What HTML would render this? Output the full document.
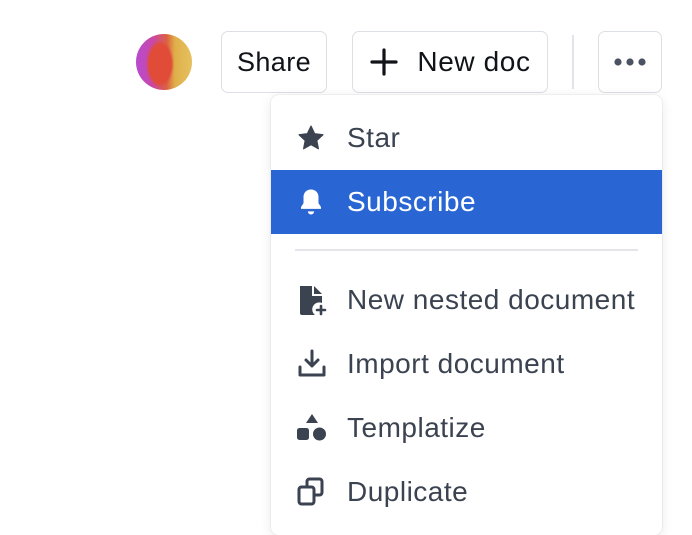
<!DOCTYPE html><html><head><style>
body{margin:0;width:692px;height:524px;background:#fff;position:relative;overflow:hidden;font-family:"Liberation Sans",sans-serif}
.btn{position:absolute;top:31px;height:62px;border:1px solid #dcdfe4;border-radius:7px;box-sizing:border-box;background:#fff;font-size:27px;letter-spacing:.4px;color:#111319;display:flex;align-items:center;justify-content:center}
.menu{position:absolute;left:271px;top:95px;width:391px;height:440px;background:#fff;border-radius:8px;box-shadow:0 2px 12px rgba(0,0,0,.09),0 0 0 1px rgba(0,0,0,.04)}
.it{position:absolute;left:0;width:391px;height:64px;display:flex;align-items:center;font-size:28px;letter-spacing:.5px;color:#3b4250}
.it span{position:absolute;left:76px}
.it svg{position:absolute;left:25px}
</style></head><body>
<div style="position:absolute;left:136px;top:34px;width:56px;height:56px;border-radius:50%;background:radial-gradient(ellipse 14px 24px at 24px 30px,#e04c38 80%,transparent 100%),linear-gradient(90deg,#b84ad0 0%,#c848a8 30%,#dd6040 55%,#dfb04a 70%,#e6c060 100%)"></div>
<div class="btn" style="left:221px;width:106px">Share</div>
<div class="btn" style="left:352px;width:196px;font-size:28px;letter-spacing:.6px"><svg width="30" height="30" viewBox="0 0 30 30" style="margin-right:18px"><path d="M15 3v24M3 15h24" stroke="#111319" stroke-width="3.2" stroke-linecap="round"/></svg>New doc</div>
<div style="position:absolute;left:572px;top:35px;width:2px;height:54px;background:#e1e4ea"></div>
<div class="btn" style="left:598px;width:64px"><svg width="32" height="10"><circle cx="4" cy="5" r="3.6" fill="#4b5263"/><circle cx="16" cy="5" r="3.6" fill="#4b5263"/><circle cx="28" cy="5" r="3.6" fill="#4b5263"/></svg></div>
<div class="menu">
<div class="it" style="top:11px"><svg width="30" height="30" viewBox="0 0 24 24"><path d="M12 2.5l2.9 6.1 6.6.8-4.9 4.6 1.3 6.6L12 17.3l-5.9 3.3 1.3-6.6-4.9-4.6 6.6-.8z" fill="#3b4250" stroke="#3b4250" stroke-linejoin="round"/></svg><span>Star</span></div>
<div class="it" style="top:75px;background:#2966d3;color:#fff"><svg width="30" height="30" viewBox="0 0 24 24"><path d="M12 2c-3.6 0-6 2.6-6 6v5l-2 3v1.5h16V16l-2-3V8c0-3.4-2.4-6-6-6zM9.5 19.5h5a2.5 2.5 0 0 1-5 0z" fill="#fff"/></svg><span>Subscribe</span></div>
<div style="position:absolute;left:24px;top:154px;width:343px;height:2px;background:#e3e5ea"></div>
<div class="it" style="top:173px"><svg width="34" height="34" viewBox="0 0 34 34"><path d="M4 3h12v10h10v7a7 7 0 0 0-7 12H6a2 2 0 0 1-2-2z" fill="#3b4250"/><path d="M18 3l8 8h-8z" fill="#3b4250"/><path d="M25 23v8M21 27h8" stroke="#3b4250" stroke-width="2.6" stroke-linecap="round"/></svg><span>New nested document</span></div>
<div class="it" style="top:237px"><svg width="32" height="32" viewBox="0 0 32 32"><path d="M16 3v15M10 12l6 6 6-6M4 19v8h24v-8" fill="none" stroke="#3b4250" stroke-width="3" stroke-linecap="round" stroke-linejoin="round"/></svg><span>Import document</span></div>
<div class="it" style="top:301px"><svg width="32" height="32" viewBox="0 0 32 32"><path d="M16 2l6 9H10z" fill="#3b4250"/><rect x="1" y="16" width="12" height="12" rx="2.5" fill="#3b4250"/><circle cx="23.5" cy="22" r="6.5" fill="#3b4250"/></svg><span>Templatize</span></div>
<div class="it" style="top:365px"><svg width="32" height="32" viewBox="0 0 32 32"><rect x="3" y="11" width="15" height="17" rx="2.5" fill="none" stroke="#3b4250" stroke-width="3"/><path d="M11 10V5.5A2.5 2.5 0 0 1 13.5 3h10a2.5 2.5 0 0 1 2.5 2.5v11a2.5 2.5 0 0 1-2.5 2.5H19" fill="none" stroke="#3b4250" stroke-width="3"/></svg><span>Duplicate</span></div>
</div>
</body></html>
